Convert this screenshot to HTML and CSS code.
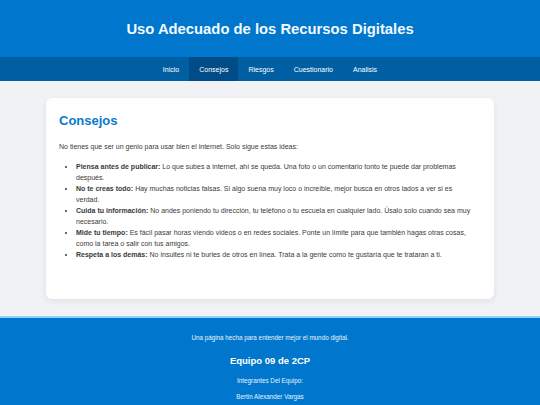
FILE: index.html
```html
<!DOCTYPE html>
<html lang="es">
<head>
<meta charset="utf-8">
<title>Uso Adecuado de los Recursos Digitales</title>
<link rel="stylesheet" href="styles.css">
</head>
<body>
<header class="site-header">
  <h1 class="site-title">Uso Adecuado de los Recursos Digitales</h1>
</header>
<nav class="site-nav">
  <a href="#" class="nav-link">Inicio</a>
  <a href="#" class="nav-link active">Consejos</a>
  <a href="#" class="nav-link">Riesgos</a>
  <a href="#" class="nav-link">Cuestionario</a>
  <a href="#" class="nav-link">Analisis</a>
</nav>
<main class="main">
  <section class="card">
    <h2 class="card-title">Consejos</h2>
    <p class="intro">No tienes que ser un genio para usar bien el internet. Solo sigue estas ideas:</p>
    <ul class="tips">
      <li><strong>Piensa antes de publicar:</strong> Lo que subes a internet, ahí se queda. Una foto o un comentario tonto te puede dar problemas después.</li>
      <li><strong>No te creas todo:</strong> Hay muchas noticias falsas. Si algo suena muy loco o increíble, mejor busca en otros lados a ver si es verdad.</li>
      <li><strong>Cuida tu información:</strong> No andes poniendo tu dirección, tu teléfono o tu escuela en cualquier lado. Úsalo solo cuando sea muy necesario.</li>
      <li><strong>Mide tu tiempo:</strong> Es fácil pasar horas viendo videos o en redes sociales. Ponte un límite para que también hagas otras cosas, como la tarea o salir con tus amigos.</li>
      <li><strong>Respeta a los demás:</strong> No insultes ni te burles de otros en línea. Trata a la gente como te gustaría que te trataran a ti.</li>
    </ul>
  </section>
</main>
<footer class="site-footer">
  <p class="footer-tagline">Una página hecha para entender mejor el mundo digital.</p>
  <h3 class="footer-team">Equipo 09 de 2CP</h3>
  <p class="footer-label">Integrantes Del Equipo:</p>
  <p class="footer-member">Bertin Alexander Vargas</p>
</footer>
</body>
</html>
```
FILE: styles.css
```css
* { box-sizing: border-box; }
html, body { margin: 0; padding: 0; }
body {
  background: #f0f2f6;
  font-family: "Liberation Sans", Arial, sans-serif;
  color: #3a3a3a;
}
.site-header {
  background: #0077cc;
  height: 57px;
  display: flex;
  align-items: center;
  justify-content: center;
}
.site-title {
  margin: 0;
  color: #f4faff;
  font-size: 14.8px;
  font-weight: bold;
}
.site-nav {
  background: #005fa3;
  height: 24px;
  display: flex;
  justify-content: center;
}
.nav-link {
  color: #fff;
  text-decoration: none;
  font-size: 7px;
  padding: 0 10px;
  display: flex;
  align-items: center;
}
.nav-link.active { background: #004c87; }
.main {
  padding: 17px 46px 17px;
}
.card {
  background: #fff;
  border-radius: 6px;
  box-shadow: 0 2px 6px rgba(0,0,0,0.08);
  padding: 15px 18px 24px 13px;
  min-height: 201px;
}
.card-title {
  margin: 0 0 13px;
  color: #0a7acb;
  font-size: 13px;
}
.intro {
  margin: 0 0 9px;
  font-size: 7px;
  line-height: 11px;
}
.tips {
  margin: 0;
  padding-left: 17px;
  font-size: 7px;
  line-height: 11px;
}
.site-footer {
  background: #0077cc;
  border-top: 2px solid #8fd6f5;
  color: #e8f4fc;
  text-align: center;
  font-family: "Liberation Sans", Arial, sans-serif;
  padding: 16px 0 0;
  height: 100px;
}
.footer-tagline { margin: 0 0 14px; font-size: 6.3px; }
.footer-team { margin: 0 0 11px; font-size: 9.5px; color: #fff; }
.footer-label { margin: 0 0 9px; font-size: 6.3px; }
.footer-member { margin: 0; font-size: 6.3px; }
```
